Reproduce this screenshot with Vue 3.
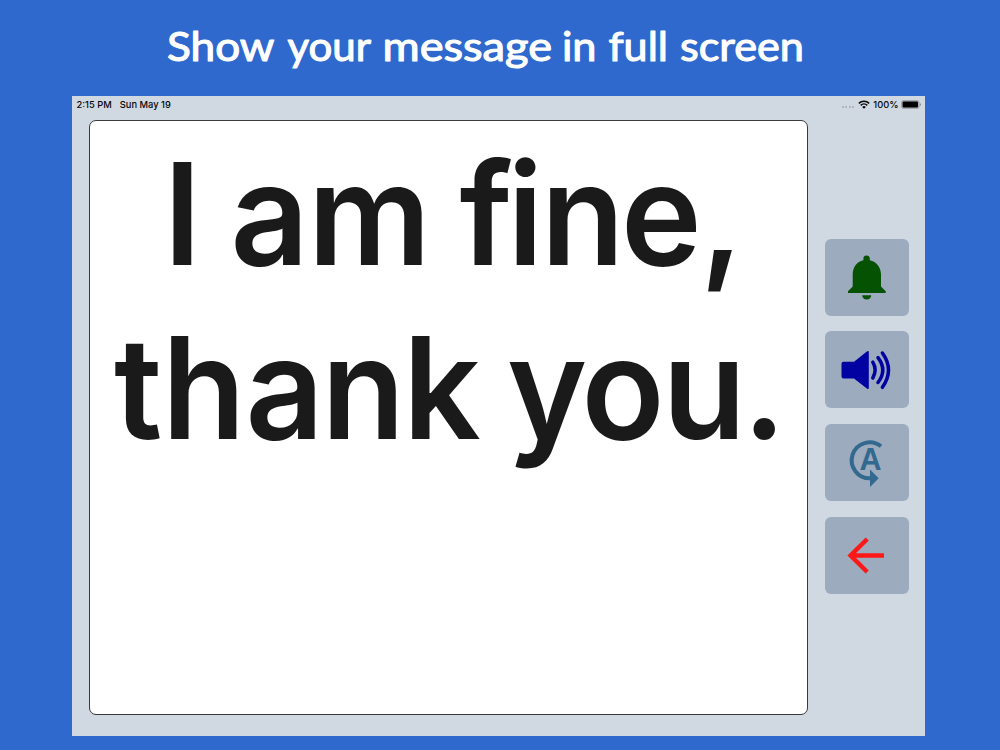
<script setup>
const title = [
  { text: 'Show', x: 167, w: 107.5 },
  { text: 'your', x: 287.5, w: 83.5 },
  { text: 'message', x: 382.5, w: 169.5 },
  { text: 'in', x: 562, w: 34.5 },
  { text: 'full', x: 608.5, w: 59.5 },
  { text: 'screen', x: 680, w: 124 },
]

const stretch = 0.965
const lines = [
  { text: 'I am fine,', y: 265, xs: [163.5, 200, 230.5, 308, 430, 459.5, 507.5, 541, 621, 700] },
  { text: 'thank you.', y: 438.7, xs: [114, 162, 245.5, 321.5, 403, 480, 507, 581.5, 662.5, 742.5] },
]
const positions = (xs) => xs.map((x) => (x / stretch).toFixed(2)).join(' ')
</script>

<template>
  <div class="page">
    <h1 class="title">
      <svg width="1000" height="96">
        <text v-for="t in title" :key="t.text" :x="t.x" y="61" :textLength="t.w" lengthAdjust="spacingAndGlyphs">{{ t.text }}</text>
      </svg>
    </h1>
    <div class="tablet">
      <header class="status">
        <span class="time">2:15 PM</span>
        <span class="date">Sun May 19</span>
        <span class="spacer"></span>
        <span class="dots"><i></i><i></i><i></i><i></i></span>
        <svg class="wifi" width="12" height="9" viewBox="0 0 12 9">
          <g fill="none" stroke="#080808" stroke-width="1.5">
            <path d="M.8 3.4a7.4 7.4 0 0 1 10.4 0" />
            <path d="M2.7 5.4a4.7 4.7 0 0 1 6.6 0" />
          </g>
          <path d="M6 8.7 4.2 6.9a2.6 2.6 0 0 1 3.6 0Z" fill="#080808" />
        </svg>
        <span class="pct">100%</span>
        <svg class="battery" width="20" height="9" viewBox="0 0 20 9">
          <rect x=".4" y=".4" width="17.8" height="8.2" rx="2.4" fill="#a9b0b7" stroke="#90979e" stroke-width=".7" />
          <rect x="1.6" y="1.6" width="15.4" height="5.9" rx="1.1" fill="#000" />
          <path d="M19 3v3q1-.5 1-1.500T19 3Z" fill="#858b91" />
        </svg>
      </header>
      <div class="body">
        <main class="message">
          <svg viewBox="90 121 717 593">
            <g :transform="`scale(${stretch} 1)`">
              <text v-for="l in lines" :key="l.text" :x="positions(l.xs)" :y="l.y">{{ l.text }}</text>
            </g>
          </svg>
        </main>
        <nav class="actions">
          <button aria-label="Bell">
            <svg viewBox="0 0 83 77" fill="#055202">
              <path d="M41.500 16.500a3.300 3.300 0 0 1 3.300 3.500v1.300C51.500 22.800 56 28.500 56 35.500V47.500l4.700 4.700V54H23v-1.800l4.700-4.700V35.500c0-7 4-12.700 10.700-14.200V20a3.200 3.200 0 0 1 3.100-3.500Z" />
              <path d="M37.200 56.300h9a4.500 4.300 0 0 1-9 0Z" />
            </svg>
          </button>
          <button aria-label="Speak">
            <svg viewBox="0 0 83 77">
              <path d="M18.500 30.800H29L42.200 20.200q1.600-.8 1.600 1V56.800q0 1.700-1.600 1L29 47.500H18.500q-2 0-2-2V32.800q0-2 2-2Z" fill="#0202a2" />
              <g fill="none" stroke="#0202a2" stroke-width="3.500" stroke-linecap="round">
                <path d="M47.800 31.200Q52.500 39 47.800 47" />
                <path d="M53 26.600Q62.600 39 53 51.500" />
                <path d="M57.400 22Q69.600 39 57.400 56.300" />
              </g>
            </svg>
          </button>
          <button aria-label="Rotate text">
            <svg viewBox="0 0 83 77">
              <path d="M56 22.300A18 18 0 1 0 45.500 54.300" fill="none" stroke="#33688f" stroke-width="4" />
              <path d="M45 45.500v17.500l8.700-8.700Z" fill="#33688f" />
              <text class="letter" x="45.500" y="46.300" text-anchor="middle">A</text>
            </svg>
          </button>
          <button aria-label="Back">
            <svg viewBox="0 0 83 77" fill="none" stroke="#ff1818" stroke-width="4.500">
              <path d="M59 38.500H27M42.200 22 25.600 38.500 42.200 55" />
            </svg>
          </button>
        </nav>
      </div>
    </div>
  </div>
</template>

<style>
body { margin: 0; }
</style>

<style scoped>
.page { width: 1000px; height: 750px; background: #2f69ce; overflow: hidden; font-family: Inter, "Liberation Sans", sans-serif; }
.title { margin: 0; height: 96.400px; }
.title svg { display: block; }
.title text { font: 400 40.500px Lato, sans-serif; fill: #fff; stroke: #fff; stroke-width: 1.1; stroke-linejoin: round; }
.tablet { box-sizing: border-box; width: 853px; height: 640px; margin-left: 72px; background: #d0d8e2; }
.status { display: flex; align-items: center; height: 16px; padding: 0 4.500px 0 4.500px; font-size: 9.350px; font-weight: 500; color: #080808; white-space: nowrap; }
.date { margin-left: 8px; }
.spacer { flex: 1; }
.dots { display: flex; gap: 1.400px; margin: 5px 4px 0 0; }
.dots i { width: 2px; height: 2px; border-radius: 50%; background: #a5abb3; }
.pct { margin: 0 2px 0 3px; }
.body { display: flex; padding: 7.600px 16.500px 0 17px; justify-content: space-between; }
.message { box-sizing: border-box; width: 719px; height: 595px; border: 1px solid #383a3d; border-radius: 7px; background: #fff; }
.message svg { display: block; width: 717px; height: 593px; }
.message text { font: 600 141.300px Inter, sans-serif; font-kerning: none; fill: #1a1a1a; white-space: pre; }
.actions { display: flex; flex-direction: column; gap: 15.700px; padding-top: 118.800px; }
button { display: block; width: 83.500px; height: 77px; padding: 0; border: 0; border-radius: 6px; background: #9cabbe; }
button svg { display: block; width: 83px; height: 77px; }
.letter { font: 700 30.500px "Liberation Sans", sans-serif; fill: #33688f; }
</style>
